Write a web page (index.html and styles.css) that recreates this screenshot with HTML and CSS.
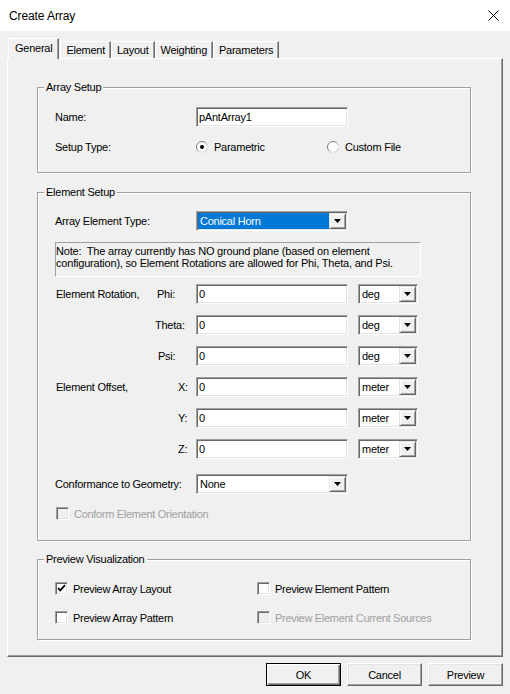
FILE: index.html
```html
<!DOCTYPE html>
<html lang="en">
<head>
<meta charset="utf-8">
<title>Create Array</title>
<link rel="stylesheet" href="styles.css">
</head>
<body>
<div class="window">
  <div class="titlebar">
    <span class="title">Create Array</span>
    <svg class="close" width="11" height="11" viewBox="0 0 11 11"><path d="M0.5 0.5L10.5 10.5M10.5 0.5L0.5 10.5" stroke="#000" stroke-width="1" fill="none"/></svg>
  </div>
  <div class="client">
    <div class="tabs">
      <div class="tab active">General</div>
      <div class="tab">Element</div>
      <div class="tab">Layout</div>
      <div class="tab">Weighting</div>
      <div class="tab">Parameters</div>
    </div>
    <div class="panel">
      <section class="group group-array">
        <div class="group-title">Array Setup</div>
        <div class="row">
          <span class="label">Name:</span>
          <div class="edit edit-name">pAntArray1</div>
        </div>
        <div class="row">
          <span class="label">Setup Type:</span>
          <div class="radios">
            <span class="radio"><svg class="radio-dot" width="12" height="12" viewBox="0 0 12 12"><circle cx="6" cy="6" r="5.5" fill="#fff" stroke="#7a7a7a"/><path d="M9.89 2.11A5.5 5.5 0 0 1 2.11 9.89" stroke="#fff" fill="none"/><circle cx="6" cy="6" r="2" fill="#000"/></svg>Parametric</span>
            <span class="radio"><svg class="radio-dot" width="12" height="12" viewBox="0 0 12 12"><circle cx="6" cy="6" r="5.5" fill="#fff" stroke="#7a7a7a"/><path d="M9.89 2.11A5.5 5.5 0 0 1 2.11 9.89" stroke="#fff" fill="none"/></svg>Custom File</span>
          </div>
        </div>
      </section>

      <section class="group group-element">
        <div class="group-title">Element Setup</div>
        <div class="row">
          <span class="label">Array Element Type:</span>
          <div class="combo combo-wide"><span class="combo-text selected">Conical Horn</span><span class="combo-btn"><svg width="7" height="4" viewBox="0 0 7 4"><path d="M0 0H7L3.5 4Z" fill="#000"/></svg></span></div>
        </div>
        <div class="note">Note:&nbsp; The array currently has NO ground plane (based on element<br>configuration), so Element Rotations are allowed for Phi, Theta, and Psi.</div>
        <div class="params">
          <span class="plabel">Element Rotation,</span><span class="axis ax-phi">Phi:</span><div class="edit">0</div><div class="combo combo-unit"><span class="combo-text">deg</span><span class="combo-btn"><svg width="7" height="4" viewBox="0 0 7 4"><path d="M0 0H7L3.5 4Z" fill="#000"/></svg></span></div>
          <span></span><span class="axis ax-theta">Theta:</span><div class="edit">0</div><div class="combo combo-unit"><span class="combo-text">deg</span><span class="combo-btn"><svg width="7" height="4" viewBox="0 0 7 4"><path d="M0 0H7L3.5 4Z" fill="#000"/></svg></span></div>
          <span></span><span class="axis ax-psi">Psi:</span><div class="edit">0</div><div class="combo combo-unit"><span class="combo-text">deg</span><span class="combo-btn"><svg width="7" height="4" viewBox="0 0 7 4"><path d="M0 0H7L3.5 4Z" fill="#000"/></svg></span></div>
          <span class="plabel">Element Offset,</span><span class="axis ax-xyz">X:</span><div class="edit">0</div><div class="combo combo-unit"><span class="combo-text">meter</span><span class="combo-btn"><svg width="7" height="4" viewBox="0 0 7 4"><path d="M0 0H7L3.5 4Z" fill="#000"/></svg></span></div>
          <span></span><span class="axis ax-xyz">Y:</span><div class="edit">0</div><div class="combo combo-unit"><span class="combo-text">meter</span><span class="combo-btn"><svg width="7" height="4" viewBox="0 0 7 4"><path d="M0 0H7L3.5 4Z" fill="#000"/></svg></span></div>
          <span></span><span class="axis ax-xyz">Z:</span><div class="edit">0</div><div class="combo combo-unit"><span class="combo-text">meter</span><span class="combo-btn"><svg width="7" height="4" viewBox="0 0 7 4"><path d="M0 0H7L3.5 4Z" fill="#000"/></svg></span></div>
        </div>
        <div class="row conform-row">
          <span class="label">Conformance to Geometry:</span>
          <div class="combo combo-wide"><span class="combo-text">None</span><span class="combo-btn"><svg width="7" height="4" viewBox="0 0 7 4"><path d="M0 0H7L3.5 4Z" fill="#000"/></svg></span></div>
        </div>
        <div class="check disabled conform-check"><span class="box"></span>Conform Element Orientation</div>
      </section>

      <section class="group group-preview">
        <div class="group-title">Preview Visualization</div>
        <div class="checks">
          <div class="check"><span class="box"><svg width="9" height="9" viewBox="0 0 9 9"><path d="M1 4L3.2 6.4L8 1.2" stroke="#000" stroke-width="1.7" fill="none"/></svg></span>Preview Array Layout</div>
          <div class="check"><span class="box"></span>Preview Element Pattern</div>
          <div class="check"><span class="box"></span>Preview Array Pattern</div>
          <div class="check disabled"><span class="box"></span>Preview Element Current Sources</div>
        </div>
      </section>
    </div>
    <div class="buttons">
      <button class="btn btn-default">OK</button>
      <button class="btn">Cancel</button>
      <button class="btn">Preview</button>
    </div>
  </div>
</div>
</body>
</html>
```

FILE: styles.css
```css
* { box-sizing: border-box; }
html, body { margin: 0; padding: 0; }
body {
  width: 510px;
  height: 694px;
  overflow: hidden;
  background: #f0f0f0;
  color: #000;
  font-family: "Liberation Sans", Arial, sans-serif;
  font-size: 11px;
  letter-spacing: -0.25px;
}
.window {
  width: 510px;
  height: 694px;
  display: flex;
  flex-direction: column;
}
.titlebar {
  height: 31px;
  flex: none;
  background: #fff;
  display: flex;
  align-items: center;
  justify-content: space-between;
  padding: 0 11px 0 9px;
  font-size: 12px;
  letter-spacing: -0.1px;
}
.close { display: block; }
.client {
  flex: 1;
  background: #f0f0f0;
  padding: 7px 7px 0 7px;
  display: flex;
  flex-direction: column;
}
.tabs {
  height: 20px;
  display: flex;
  align-items: flex-end;
  padding-left: 1px;
  position: relative;
  z-index: 1;
}
.tab {
  height: 17px;
  line-height: 16px;
  padding: 0 5px;
  border: 1px solid;
  border-bottom: none;
  border-color: #fff #696969 transparent #fff;
  box-shadow: inset -1px 0 0 #a0a0a0;
  background: #f0f0f0;
  white-space: nowrap;
}
.tab.active {
  height: 21px;
  line-height: 18px;
  margin-bottom: -1px;
  margin-right: 1px;
  padding: 0 6px;
}
.panel {
  height: 599px;
  flex: none;
  border: 1px solid;
  border-color: #fff #696969 #696969 #fff;
  box-shadow: inset -1px -1px 0 #a0a0a0;
  padding: 28px 31px 0 29px;
}
.group {
  position: relative;
  border: 1px solid #a0a0a0;
  box-shadow: inset 1px 1px 0 #fff, 1px 1px 0 #fff;
  padding: 0 0 0 17px;
}
.group-title {
  position: absolute;
  top: -7px;
  left: 6px;
  line-height: 13px;
  padding: 0 2px;
  background: #f0f0f0;
  white-space: nowrap;
}
.group-array { height: 86px; padding-top: 19px; }
.group-element { height: 349px; margin-top: 19px; padding-top: 18px; }
.group-preview { height: 81px; margin-top: 18px; padding-top: 22px; }

.row {
  display: flex;
  align-items: center;
  height: 20px;
}
.row + .row { margin-top: 10px; }
.label { width: 141px; flex: none; white-space: nowrap; }

.edit {
  height: 20px;
  width: 152px;
  background: #fff;
  border: 1px solid;
  border-color: #a0a0a0 #fff #fff #a0a0a0;
  box-shadow: inset 1px 1px 0 #696969, inset -1px -1px 0 #e3e3e3;
  padding: 0 2px;
  line-height: 18px;
  white-space: nowrap;
}

.radios { display: flex; align-items: center; }
.radio { display: flex; align-items: center; width: 131px; white-space: nowrap; }
.radio-dot { display: block; margin-right: 6px; }

.combo {
  display: flex;
  height: 20px;
  border: 1px solid;
  border-color: #a0a0a0 #fff #fff #a0a0a0;
  box-shadow: inset 1px 1px 0 #696969, inset -1px -1px 0 #e3e3e3;
  background: #fff;
  padding: 1px;
}
.combo-wide { width: 152px; }
.combo-unit { width: 60px; margin-left: 10px; }
.combo-text {
  flex: 1;
  line-height: 16px;
  padding-left: 2px;
  white-space: nowrap;
}
.combo-text.selected { background: #0078d7; color: #fff; }
.combo-btn {
  width: 17px;
  height: 16px;
  flex: none;
  border: 1px solid;
  border-color: #e3e3e3 #696969 #696969 #e3e3e3;
  box-shadow: inset 1px 1px 0 #fff, inset -1px -1px 0 #a0a0a0;
  background: #f0f0f0;
  display: flex;
  align-items: center;
  justify-content: center;
}
.combo-btn svg { display: block; }

.note {
  margin-top: 11px;
  width: 366px;
  height: 35px;
  border: 1px solid;
  border-color: #a0a0a0 #fff #fff #a0a0a0;
  padding: 2px 0 0 0;
  line-height: 12px;
  white-space: nowrap;
  letter-spacing: -0.2px;
}

.params {
  margin-top: 7px;
  display: grid;
  grid-template-columns: 100px 41px 152px 70px;
  grid-auto-rows: 20px;
  row-gap: 11px;
  align-items: center;
}
.plabel { white-space: nowrap; padding-left: 1px; }
.axis { white-space: nowrap; }
.ax-phi { padding-left: 2px; }
.ax-theta { padding-left: 0; }
.ax-psi { padding-left: 3px; }
.ax-xyz { padding-left: 23px; }

.conform-row { margin-top: 15px; }

.check {
  display: flex;
  align-items: center;
  height: 13px;
  white-space: nowrap;
}
.box {
  width: 13px;
  height: 13px;
  flex: none;
  margin-right: 5px;
  border: 1px solid;
  border-color: #a0a0a0 #fff #fff #a0a0a0;
  box-shadow: inset 1px 1px 0 #696969, inset -1px -1px 0 #e3e3e3;
  background: #fff;
  display: flex;
  align-items: center;
  justify-content: center;
}
.box svg { display: block; }
.check.disabled { color: #a0a0a0; }
.check.disabled .box { background: #f0f0f0; }
.conform-check { margin-top: 13px; margin-left: 1px; letter-spacing: -0.3px; }
.checks .check { letter-spacing: -0.3px; }

.checks {
  display: grid;
  grid-template-columns: 202px auto;
  row-gap: 16px;
}

.buttons {
  display: flex;
  justify-content: flex-end;
  gap: 6px;
  margin-top: 6px;
}
.btn {
  width: 75px;
  height: 23px;
  margin: 0;
  padding: 0;
  font: inherit;
  letter-spacing: inherit;
  color: #000;
  background: #f0f0f0;
  border: 1px solid;
  border-color: #fff #696969 #696969 #fff;
  box-shadow: inset -1px -1px 0 #a0a0a0, inset 1px 1px 0 #e3e3e3;
}
.btn-default {
  border-color: #000;
  box-shadow: inset 1px 1px 0 #fff, inset -1px -1px 0 #696969, inset -2px -2px 0 #a0a0a0;
}
```
